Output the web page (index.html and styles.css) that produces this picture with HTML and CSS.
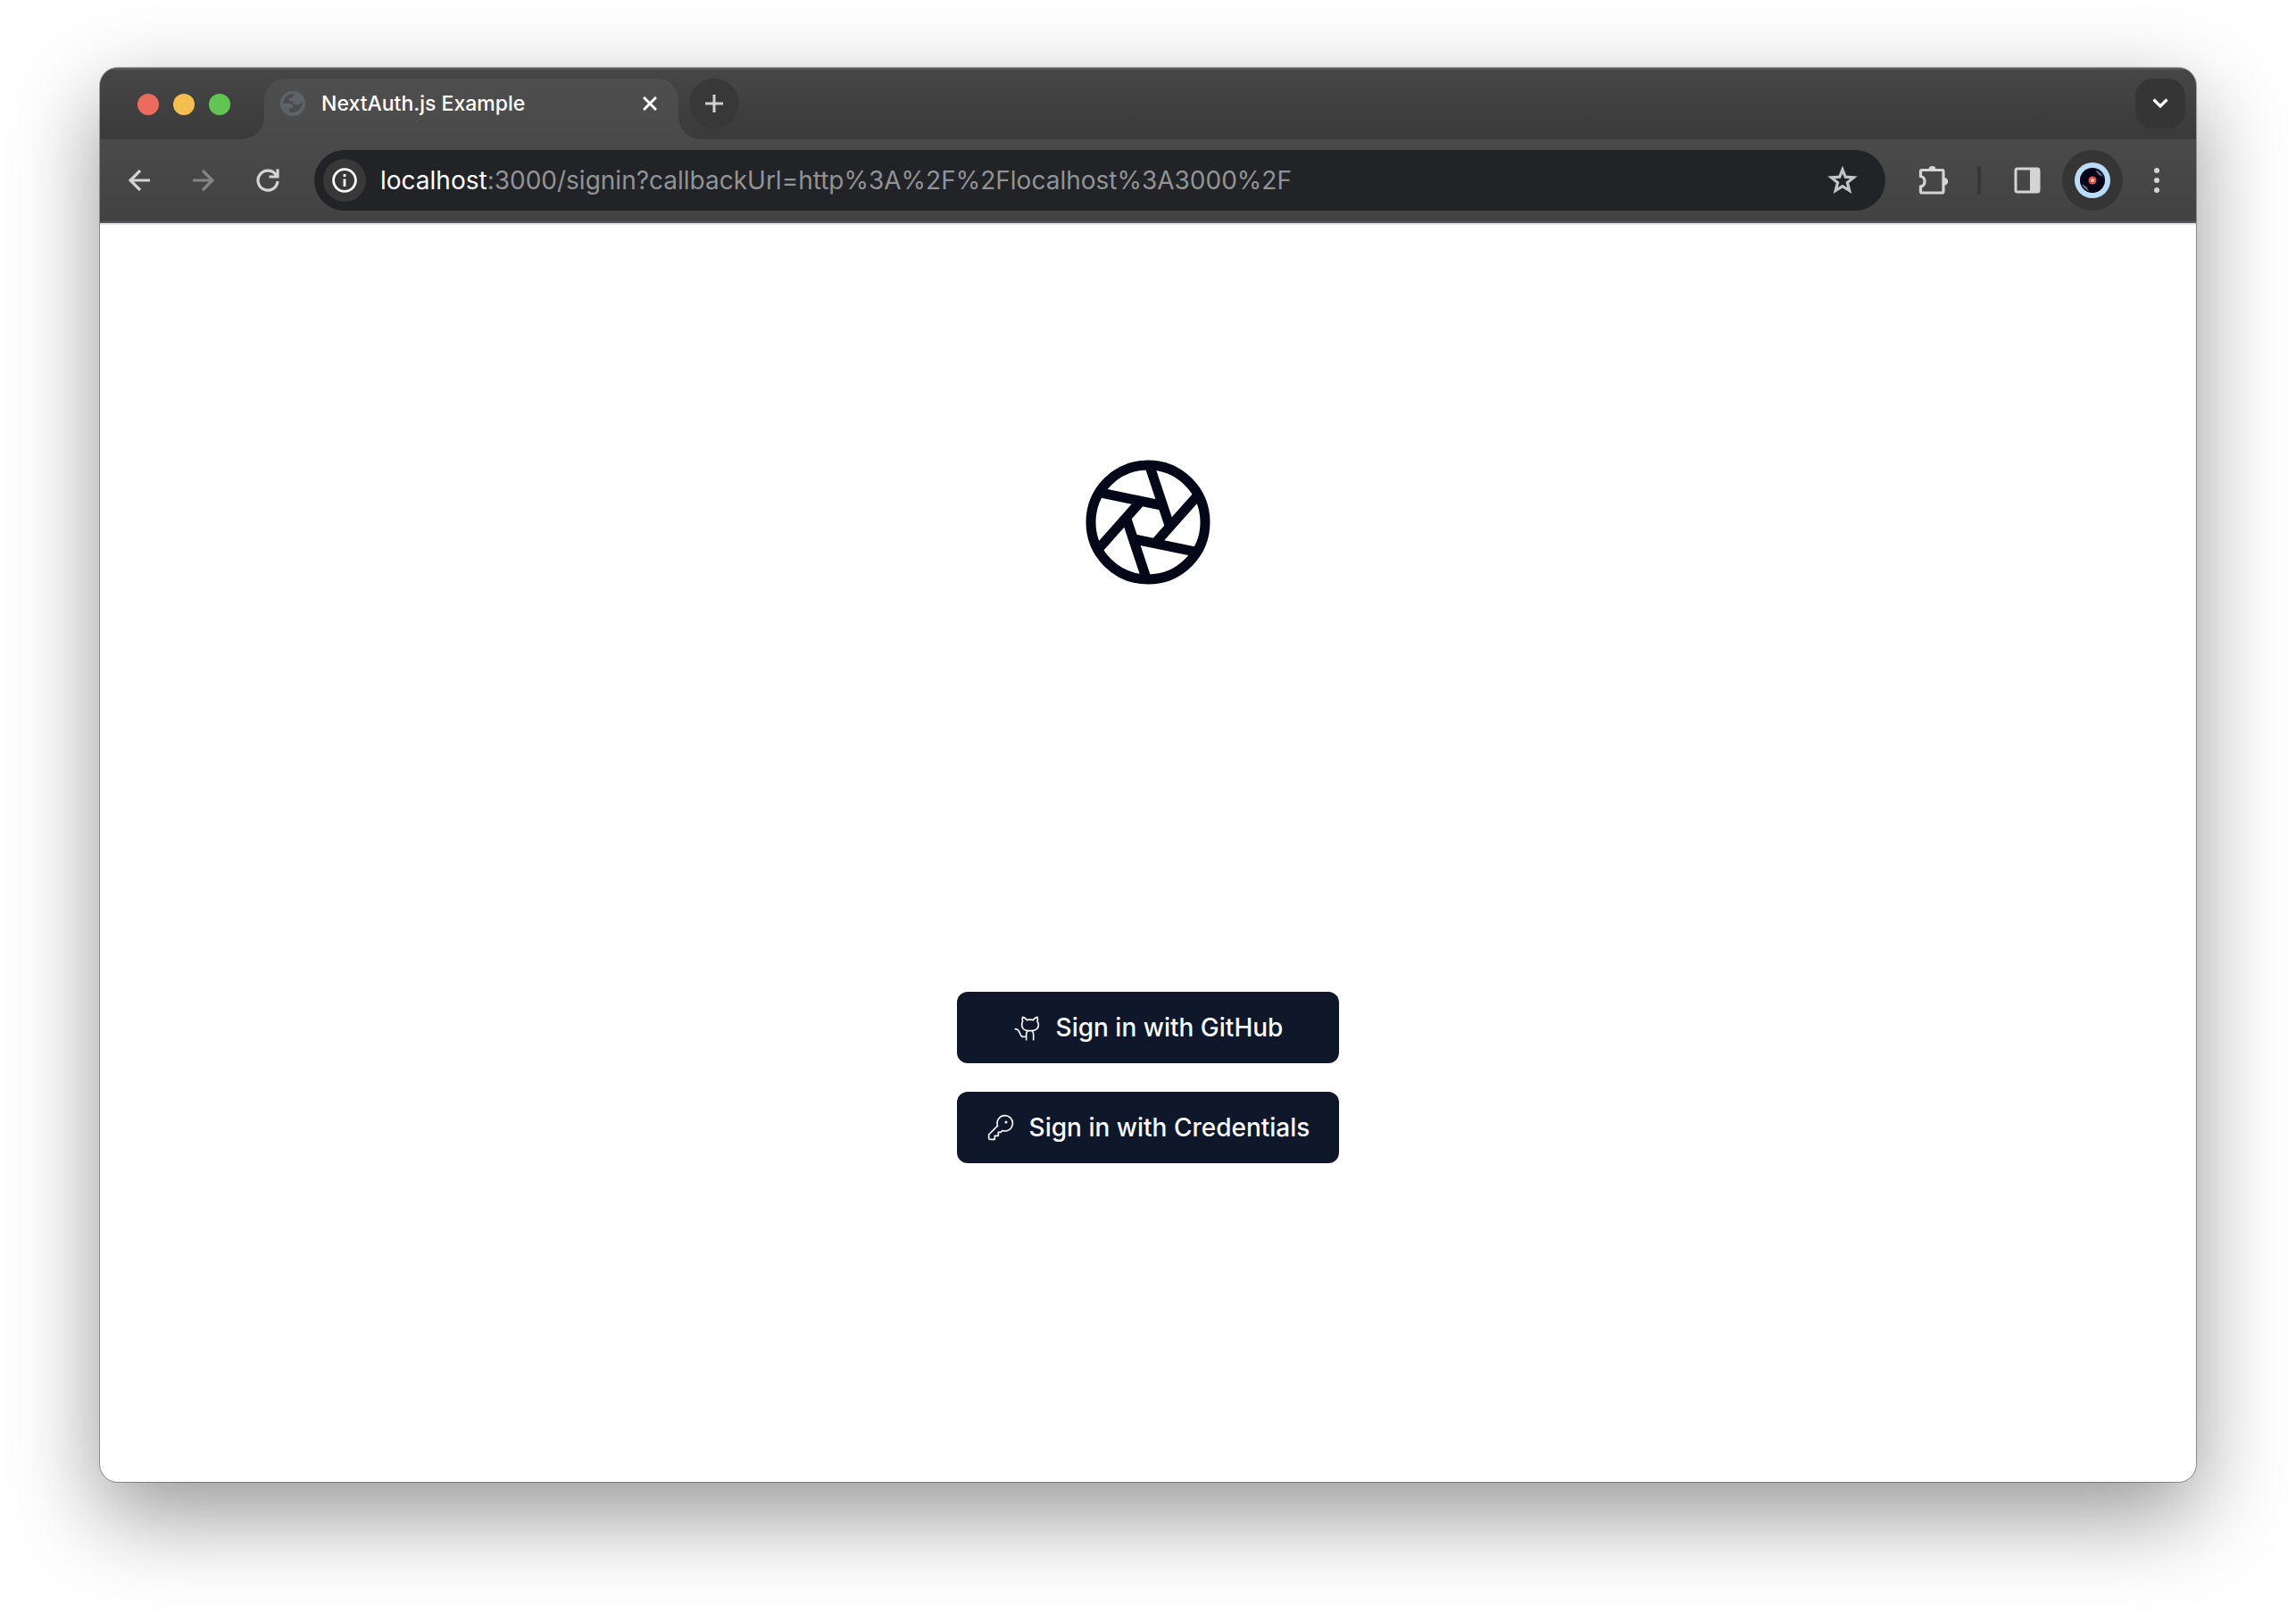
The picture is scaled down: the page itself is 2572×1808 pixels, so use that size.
FILE: index.html
```html
<!DOCTYPE html>
<html lang="en">
<head>
<meta charset="utf-8">
<title>NextAuth.js Example</title>
<link rel="stylesheet" href="styles.css">
</head>
<body>
<div class="window">
  <header class="chrome">
    <div class="tabstrip">
      <div class="lights">
        <button class="light light-close" aria-label="Close window"></button>
        <button class="light light-min" aria-label="Minimize window"></button>
        <button class="light light-max" aria-label="Zoom window"></button>
      </div>
      <div class="tab">
        <svg class="globe" viewBox="0 0 28 28" aria-hidden="true"><circle cx="14" cy="14" r="14" fill="#5f6368"/><path d="M14 3.200C8 3.200 3.300 8 3.200 13.800H9.500q4.500 0 4.500 4V19h-4v4.300a11 11 0 0 0 14.500-11.500l-3.500 3.400h-4.500q-2.500 0-2.500-3v-1h-4V7.500h4q0-3 3-3.700Q15.500 3.200 14 3.200Z" fill="#4b4b4b"/></svg>
        <span class="tab-title">NextAuth.js Example</span>
        <button class="tab-close" aria-label="Close tab"><svg width="16" height="16" viewBox="0 0 16 16"><path d="M1 1 15 15M15 1 1 15" stroke="#fff" stroke-width="3"/></svg></button>
      </div>
      <button class="new-tab" aria-label="New tab"><svg width="20" height="20" viewBox="0 0 20 20"><path d="M10 0V20M0 10H20" stroke="#d0d0d0" stroke-width="3"/></svg></button>
      <button class="tab-search" aria-label="Search tabs"><svg width="18" height="12" viewBox="0 0 18 12"><path d="M1.500 1.500 9 9l7.500-7.500" fill="none" stroke="#fff" stroke-width="3.200"/></svg></button>
    </div>
    <div class="toolbar">
      <button class="nav" aria-label="Back"><svg width="24" height="24" viewBox="0 0 24 24"><path d="M24 12H2M13 1 2 12l11 11" fill="none" stroke="#d4d4d4" stroke-width="3.200"/></svg></button>
      <button class="nav" aria-label="Forward"><svg width="24" height="24" viewBox="0 0 24 24"><path d="M0 12H22M11 1l11 11-11 11" fill="none" stroke="#848484" stroke-width="3.200"/></svg></button>
      <button class="nav" aria-label="Reload"><svg width="26" height="26" viewBox="0 0 26 26"><path d="M22.500 7.500A11 11 0 1 0 24 14" fill="none" stroke="#d4d4d4" stroke-width="3.200"/><path d="M24 .5V9H14.500" fill="none" stroke="#d4d4d4" stroke-width="3.200"/></svg></button>
      <div class="omnibox">
        <button class="site-info" aria-label="Site information"><svg width="28" height="28" viewBox="0 0 28 28"><circle cx="14" cy="14" r="12.400" fill="none" stroke="#fff" stroke-width="2.800"/><path d="M14 12.500V21M14 7V10" stroke="#fff" stroke-width="2.800"/></svg></button>
        <span class="url"><span class="host">localhost</span>:3000/signin?callbackUrl=http%3A%2F%2Flocalhost%3A3000%2F</span>
        <button class="star" aria-label="Bookmark"><svg width="34" height="32" viewBox="0 0 34 32"><path d="M17 4 20.200 12.200 29.500 12.900 22.400 18.500 24.800 27.500 17 22.600 9.200 27.500 11.600 18.500 4.500 12.900 13.800 12.200Z" fill="none" stroke="#c4c4c4" stroke-width="3.200"/></svg></button>
      </div>
      <button class="ext" aria-label="Extensions"><svg width="34" height="34" viewBox="0 0 34 34"><path d="M4 5.500H26.500Q28 5.500 28 7V29.500Q28 31 26.500 31H4Q2.500 31 2.500 29.500V24Q7 23 7 18.200T2.500 12.500V7Q2.500 5.500 4 5.500Z" fill="none" stroke="#d4d4d4" stroke-width="3.200"/><path d="M11.500 5a4 4 0 0 1 8 0ZM29 14a4 4 0 0 1 0 8.500Z" fill="#d4d4d4"/></svg></button>
      <span class="divider"></span>
      <button class="panel" aria-label="Side panel"><svg width="30" height="30" viewBox="0 0 30 30"><rect x="2" y="2" width="26" height="26" rx="2" fill="none" stroke="#d4d4d4" stroke-width="3"/><path d="M18 2h10v26H18Z" fill="#d4d4d4"/></svg></button>
      <button class="profile" aria-label="Profile"><svg width="40" height="40" viewBox="0 0 40 40"><circle cx="20" cy="20" r="20" fill="#bbdcf9"/><circle cx="20" cy="20" r="14" fill="#050318"/><path d="M23 8.500q6 1 9 7.500l-5-2ZM8 24q2 6 8 8l-2.500-5Z" fill="#62626c"/><circle cx="20" cy="20" r="4.500" fill="#e8486a"/><circle cx="20" cy="20" r="2" fill="#fbd25c"/></svg></button>
      <button class="more" aria-label="Menu"><svg width="6" height="28" viewBox="0 0 6 28" fill="#d4d4d4"><circle cx="3" cy="3" r="3"/><circle cx="3" cy="14" r="3"/><circle cx="3" cy="25" r="3"/></svg></button>
    </div>
  </header>
  <main class="page">
    <svg class="logo" viewBox="-228 -228 456 456" fill="none" stroke="#020817" stroke-width="33" role="img" aria-label="Aperture">
      <circle r="192"/>
      <path id="blade" d="M4.600-192 73.500 15"/>
      <use href="#blade" transform="rotate(60)"/><use href="#blade" transform="rotate(120)"/><use href="#blade" transform="rotate(180)"/><use href="#blade" transform="rotate(240)"/><use href="#blade" transform="rotate(300)"/>
    </svg>
    <div class="actions">
      <button class="signin"><svg class="icon" viewBox="11 9 96 96" stroke-width="5" aria-hidden="true"><path d="M55 98V80Q55 73 60 68C47 67 40 58 40 48Q40 41 43 37Q40 30 43 22Q49 22 57 32Q67 29 78 32Q86 22 92 22Q95 30 92 37Q96 41 96 48C96 58 89 67 74 68Q79 73 79 80V98M60 68H74M55 87C34 93 36 78 30 69Q26 62 18 62"/></svg>Sign in with GitHub</button>
      <button class="signin"><svg class="icon" viewBox="0 0 24 24" stroke-width="1.250" aria-hidden="true"><path d="M2 18v3c0 .6.4 1 1 1h4v-3h3v-3h2l1.400-1.400a6.500 6.500 0 1 0-4-4Z"/><circle cx="16.500" cy="7.500" r=".5"/></svg>Sign in with Credentials</button>
    </div>
  </main>
</div>
</body>
</html>
```
FILE: styles.css
```css
* { box-sizing: border-box; }
body {
  margin: 0;
  min-height: 100vh;
  padding: 76px 112px 148px;
  display: flex;
  background: #fff;
  font-family: Inter, "Liberation Sans", sans-serif;
}
button {
  margin: 0;
  padding: 0;
  border: 0;
  background: none;
  font: inherit;
  color: inherit;
  display: flex;
  align-items: center;
  justify-content: center;
  flex: none;
}
svg { display: block; flex: none; }
.window {
  flex: 1;
  display: flex;
  flex-direction: column;
  border-radius: 20px;
  background: #fff;
  box-shadow: 0 0 0 1px rgba(0, 0, 0, .32), 0 36px 100px rgba(0, 0, 0, .42);
}
.chrome {
  border-radius: 20px 20px 0 0;
  overflow: hidden;
  background: linear-gradient(#4e4e4e, #424242);
  border-bottom: 2px solid #5c5c5e;
}
.tabstrip {
  height: 80px;
  padding: 12px 12px 0 42px;
  display: flex;
  align-items: flex-start;
  background: linear-gradient(#474747, #3a3a3a);
  box-shadow: inset 0 2px #5a5a5a;
}
.lights { display: flex; gap: 16px; padding-top: 17px; width: 142px; }
.light { width: 24px; height: 24px; border-radius: 50%; }
.light-close { background: #ed6a5e; }
.light-min { background: #f5bf4f; }
.light-max { background: #61c554; }
.tab {
  position: relative;
  width: 464px;
  height: 68px;
  margin-right: 12px;
  padding: 0 24px 12px 18px;
  display: flex;
  align-items: center;
  border-radius: 24px 24px 0 0;
  background: linear-gradient(#4e4e4e, #4a4a4a);
}
.tab::before, .tab::after {
  content: "";
  position: absolute;
  bottom: 0;
  width: 24px;
  height: 24px;
}
.tab::before { right: 100%; background: radial-gradient(circle at 0 0, transparent 23px, #4a4a4a 24px); }
.tab::after { left: 100%; background: radial-gradient(circle at 100% 0, transparent 23px, #4a4a4a 24px); }
.globe { width: 28px; height: 28px; }
.tab-title { flex: 1; margin-left: 18px; font-size: 23px; font-weight: 500; color: #fff; white-space: nowrap; }
.new-tab { width: 56px; height: 56px; border-radius: 50%; background: #383838; }
.tab-search { width: 56px; height: 56px; margin-left: auto; border-radius: 20px; background: #353535; }
.toolbar {
  height: 92px;
  padding: 0 12px 0 8px;
  display: flex;
  align-items: center;
  background: linear-gradient(#4a4a4a, #424242);
}
.nav { width: 72px; height: 72px; }
.omnibox {
  flex: 1;
  height: 68px;
  margin-left: 16px;
  padding: 0 31px 0 10px;
  display: flex;
  align-items: center;
  border-radius: 34px;
  background: #212327;
}
.site-info { width: 48px; height: 48px; border-radius: 50%; background: #383838; }
.url { flex: 1; margin-left: 16px; font-size: 28px; color: #929395; white-space: nowrap; }
.host { color: #fff; }
.ext { margin-left: 37px; }
.divider { width: 4px; height: 32px; margin: 0 37px 0 32px; border-radius: 2px; background: #363636; }
.profile { width: 68px; height: 68px; margin: 0 35px 0 24px; border-radius: 50%; background: #353535; }
.more { margin-right: 29px; }
.page {
  flex: 1;
  padding-top: 257px;
  display: flex;
  flex-direction: column;
  align-items: center;
  gap: 450px;
  border-top: 2px solid #e2e8f0;
}
.logo { width: 152px; height: 152px; }
.actions { display: flex; flex-direction: column; gap: 32px; }
.signin {
  height: 80px;
  padding: 0 33px;
  gap: 16px;
  border-radius: 12px;
  background: #0f172a;
  color: #f8fafc;
  font-size: 28px;
  font-weight: 500;
}
.icon { width: 32px; height: 32px; fill: none; stroke: currentColor; stroke-linecap: round; stroke-linejoin: round; }
```
